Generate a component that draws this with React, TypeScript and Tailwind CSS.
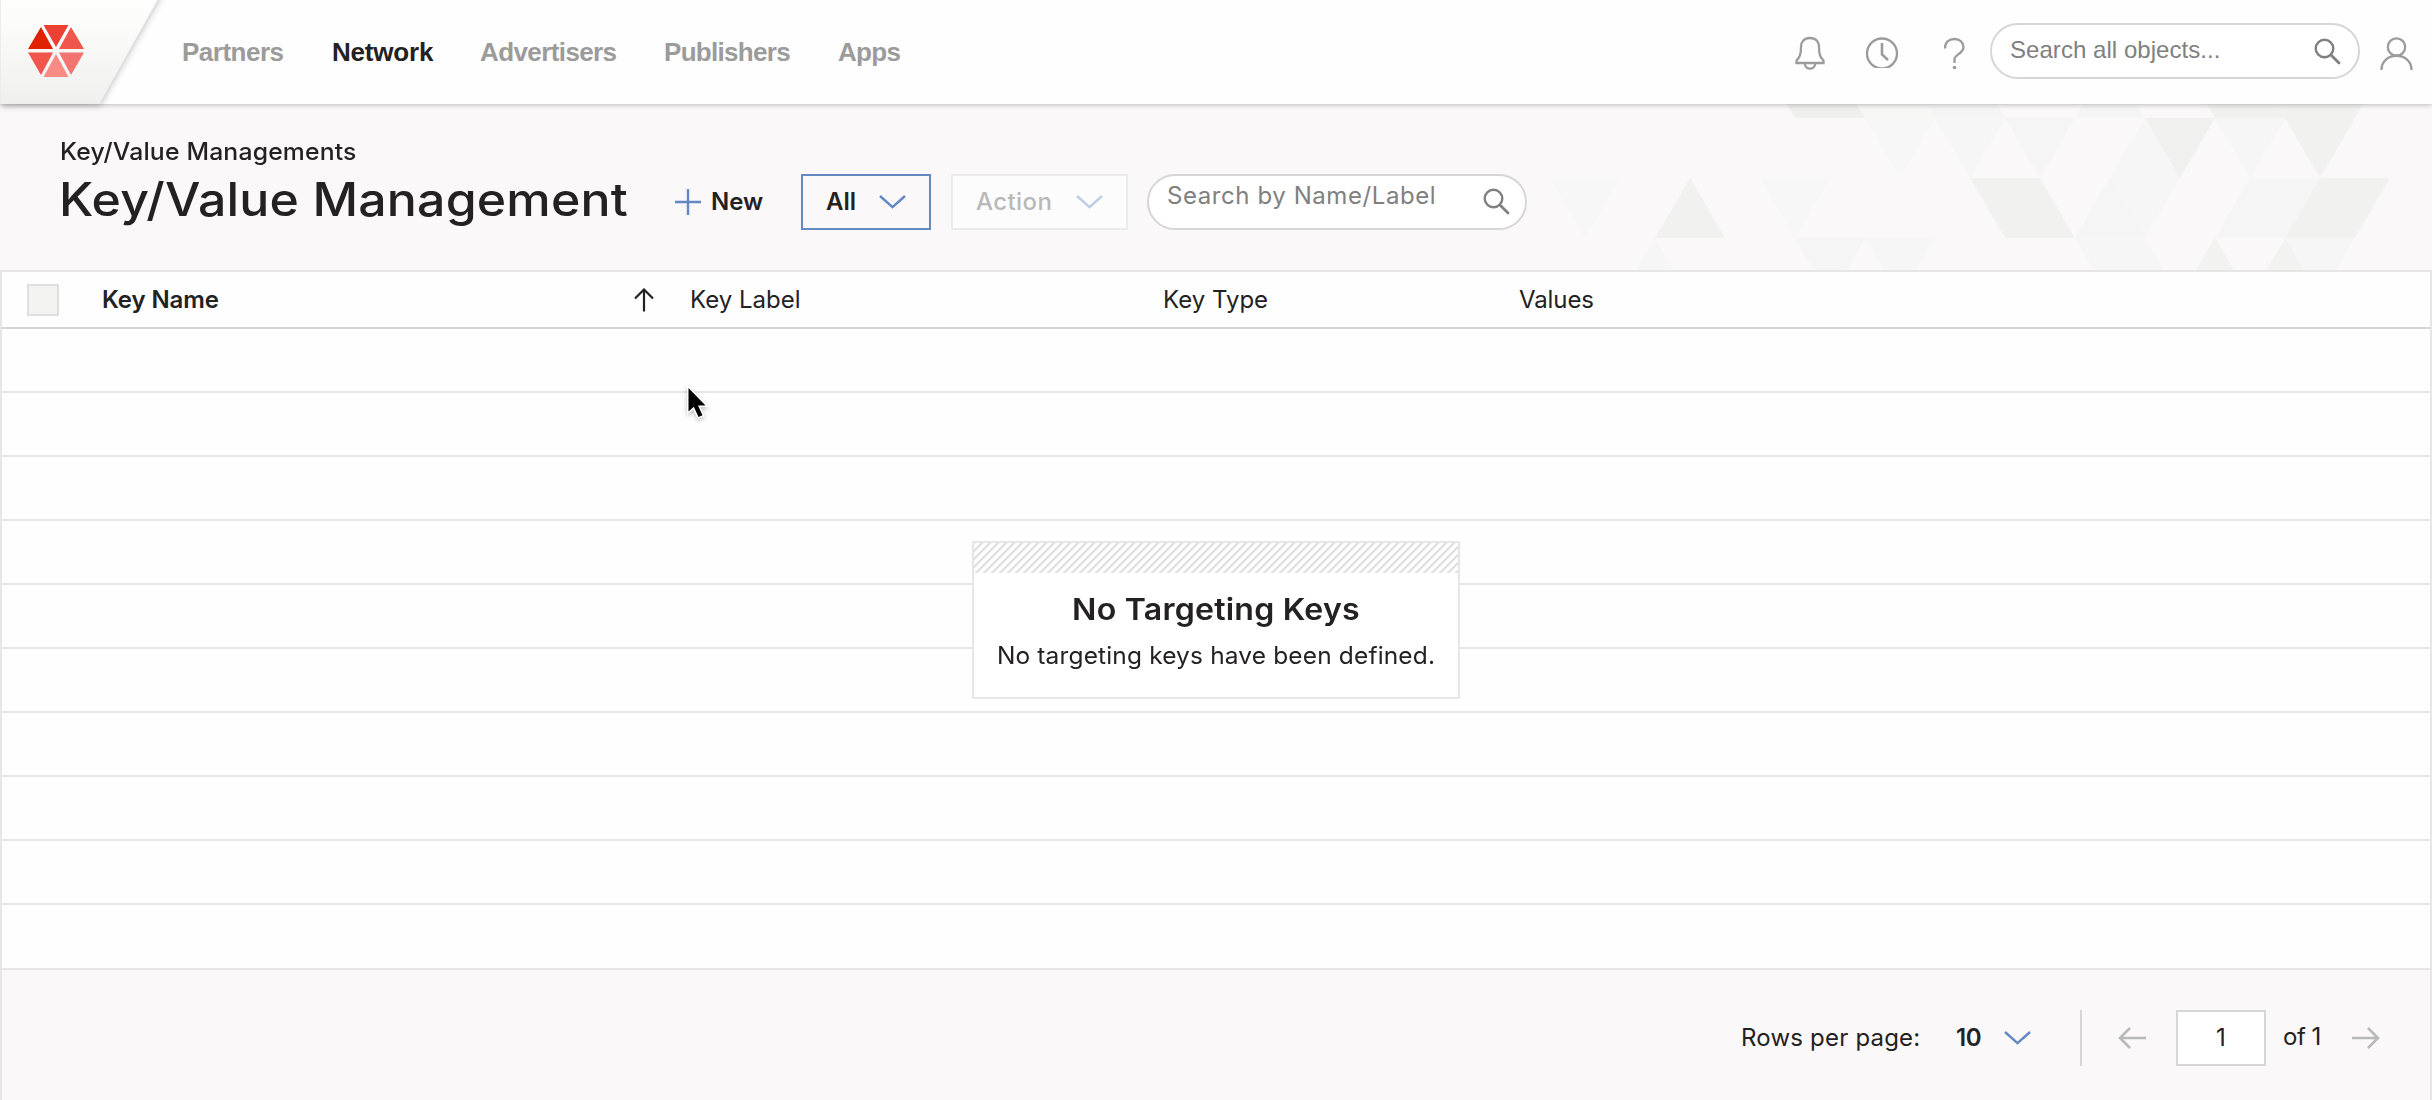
import React from "react";

const NAV = [
  { label: "Partners", className: "w-[150px] text-[#9b9b9b] tracking-[-0.5px]" },
  { label: "Network", className: "w-[148px] text-[#232122] tracking-[-0.2px]" },
  { label: "Advertisers", className: "w-[184px] text-[#9b9b9b] tracking-[-0.6px]" },
  { label: "Publishers", className: "w-[174px] text-[#9b9b9b] tracking-[-0.7px]" },
  { label: "Apps", className: "text-[#9b9b9b] tracking-[-0.7px]" },
];

function Logo() {
  return (
    <svg className="h-[124px] w-[182px] shrink-0 self-start" viewBox="0 0 182 124">
      <defs>
        <linearGradient id="tab" x1="0" y1="0" x2="0" y2="1">
          <stop offset="0" stopColor="#ffffff" />
          <stop offset="0.35" stopColor="#fbfbfa" />
          <stop offset="1" stopColor="#efefee" />
        </linearGradient>
        <linearGradient id="first" x1="0" y1="0" x2="1" y2="1">
          <stop offset="0" stopColor="#c81e08" />
          <stop offset="0.5" stopColor="#e12202" />
        </linearGradient>
        <filter id="tabShadow" x="-10%" y="-10%" width="125%" height="130%">
          <feDropShadow dx="1" dy="2" stdDeviation="3" floodColor="#000" floodOpacity="0.22" />
        </filter>
      </defs>
      <path d="M1 -12H164L99 104H1Z" fill="url(#tab)" filter="url(#tabShadow)" />
      <path d="M28 49L41 27L53 49Z" fill="url(#first)" />
      <path d="M43.5 25H68.5L56 47Z" fill="#ee4136" />
      <path d="M71 27L84 49H59Z" fill="#f0564c" />
      <path d="M28 52.5H53L41 75Z" fill="#f0564c" />
      <path d="M56 54L68.5 77H43.5Z" fill="#f88c85" />
      <path d="M59 52.5H84L71 75Z" fill="#f47471" />
    </svg>
  );
}

function SearchIcon({ className }: { className: string }) {
  return (
    <svg className={className} viewBox="0 0 27 27" fill="none" stroke="#808080" strokeWidth="2.4">
      <circle cx="10.5" cy="10.5" r="8.8" />
      <path d="M17 17L25 25" strokeWidth="2.8" strokeLinecap="round" />
    </svg>
  );
}

function Chevron() {
  return (
    <svg className="h-[14px] w-[27px]" viewBox="0 0 27 14" fill="none" stroke="#6488c4" strokeWidth="2.4">
      <path d="M1 1L13.5 12.2L26 1" />
    </svg>
  );
}

function TopBar() {
  return (
    <header className="relative z-10 flex h-[104px] items-center bg-[#fefefe] shadow-[0_1px_5px_rgba(0,0,0,0.25)]">
      <Logo />
      <nav className="flex font-['Liberation_Sans',sans-serif] text-[26px] leading-[30px] font-bold">
        {NAV.map((n) => (
          <a key={n.label} className={n.className}>
            {n.label}
          </a>
        ))}
      </nav>
      <div className="ml-auto flex items-center">
        <svg className="mt-px h-[34px] w-[30px]" viewBox="0 0 30 34" fill="none" stroke="#9b9b9b" strokeWidth="2.3">
          <path d="M15 2C9 2 6 6 6 11C6 19 4.500 21.500 1.500 24.500V27H28.500V24.500C25.500 21.500 24 19 24 11C24 6 21 2 15 2Z" />
          <path d="M9.700 27.500C10.200 34.300 19.800 34.300 20.300 27.500" />
        </svg>
        <svg className="mt-px ml-[40px] h-[31px] w-[34px]" viewBox="0 0 34 31" fill="none" stroke="#9b9b9b" strokeWidth="2.3">
          <circle cx="17" cy="16.500" r="15" />
          <path d="M17 6V17.500L23 23" strokeWidth="2.6" />
        </svg>
        <svg className="mt-px ml-[44px] h-[32px] w-[22px]" viewBox="0 0 22 32" fill="none" stroke="#9b9b9b" strokeWidth="2.3">
          <path d="M2 11.500C2 5 6 2 11.500 2C17 2 20.500 5.500 20.500 10C20.500 17 11.500 17 11.500 22.500V26" />
          <circle cx="11.500" cy="30.500" r="1.800" fill="#9b9b9b" stroke="none" />
        </svg>
        <div className="-mt-[2px] ml-[25px] flex h-[56px] w-[370px] items-center rounded-full border-2 border-[#d6d6d6] bg-white pr-[17px] pl-[18px]">
          <span className="-mt-[3px] grow font-['Liberation_Sans',sans-serif] text-[24px] leading-[28px] tracking-[0.05px] text-[#808080]">
            Search all objects...
          </span>
          <SearchIcon className="mt-px h-[27px] w-[27px]" />
        </div>
        <svg className="mt-[2px] mr-[19px] ml-[20px] h-[33px] w-[33px]" viewBox="0 0 33 33" fill="none" stroke="#9b9b9b" strokeWidth="2.3">
          <circle cx="16.500" cy="10" r="8.700" />
          <path d="M1.500 33C1.500 14 31.500 14 31.500 33" />
        </svg>
      </div>
    </header>
  );
}

/* Triangle lattice: each side is 70px and each row is 60px high. */
const FACETS: [string, string][] = [
  ["226,-46 296,-46 331,14 261,14", "#efefed"],
  ["296,-46 366,-46 401,14 331,14", "#f7f7f6"],
  ["366,-46 436,-46 471,14 401,14", "#f4f5f4"],
  ["576,-46 611,14 541,14", "#f4f5f4"],
  ["646,-46 716,-46 751,14 681,14", "#f1f2f0"],
  ["716,-46 856,-46 821,14 751,14", "#f1f2f0"],
  ["331,14 401,14 366,74", "#f6f7f6"],
  ["401,14 471,14 436,74", "#f5f6f5"],
  ["471,14 541,14 506,74", "#f4f5f4"],
  ["611,14 646,74 576,74", "#f5f6f5"],
  ["611,14 681,14 646,74", "#f0f1ef"],
  ["681,14 751,14 716,74", "#f5f6f5"],
  ["751,14 821,14 786,74", "#f1f2f0"],
  ["16,74 86,74 51,134", "#f6f7f6"],
  ["156,74 191,134 121,134", "#f1f2f0"],
  ["226,74 296,74 261,134", "#f6f7f6"],
  ["436,74 506,74 541,134 471,134", "#f1f2f0"],
  ["576,74 646,74 611,134 541,134", "#f5f6f5"],
  ["576,74 611,134 541,134", "#f4f5f4"],
  ["716,74 786,74 751,134 681,134", "#f4f5f4"],
  ["786,74 856,74 821,134 751,134", "#f1f2f0"],
  ["121,134 156,194 86,194", "#f5f6f5"],
  ["261,134 331,134 296,194", "#f4f5f4"],
  ["331,134 401,134 366,194", "#f5f6f5"],
  ["541,134 611,134 646,194 576,194", "#f5f6f5"],
  ["681,134 716,194 646,194", "#f2f3f1"],
  ["751,134 786,194 716,194", "#f2f3f1"],
  ["751,134 821,134 786,194", "#f5f6f5"],
];

function TitleBand() {
  return (
    <section className="relative flex h-[166px] bg-[#faf8f8] pl-[60px] font-[Inter,sans-serif] text-[#232122]">
      <svg className="absolute top-0 right-0 h-[166px] w-[898px]" viewBox="0 0 898 166">
        {FACETS.map(([points, fill], i) => (
          <polygon key={i} points={points} fill={fill} />
        ))}
      </svg>
      <div className="relative w-[614px] pt-[34px]">
        <div className="origin-left scale-x-[1.03] text-[24px] leading-[28px] font-medium tracking-[0.18px]">
          Key/Value Managements
        </div>
        <h1 className="-ml-px mt-[5px] origin-left scale-x-[1.087] text-[46px] leading-[56px] font-medium tracking-[0.15px] whitespace-nowrap">
          Key/Value Management
        </h1>
      </div>
      <div className="relative mt-[70px] flex h-[56px] items-center text-[24px] leading-[28px] font-semibold">
        <svg className="h-[28px] w-[28px]" viewBox="0 0 28 28" stroke="#6488c4" strokeWidth="2.4">
          <path d="M1 14H27M14 1V27" />
        </svg>
        <span className="-mt-px ml-[9px] w-[90px]">New</span>
        <div className="flex h-[56px] w-[130px] items-center justify-between border-2 border-[#6488c4] pr-[23px] pl-[23px]">
          <span className="-mt-px">All</span>
          <Chevron />
        </div>
        <div className="ml-[20px] flex h-[56px] w-[177px] items-center justify-between border-2 border-[#ebebeb] bg-[#fcfcfc] pr-[23px] pl-[23px]">
          <span className="-mt-px font-medium tracking-[0.4px] text-[#b9b8b8]">Action</span>
          <span className="flex opacity-40">
            <Chevron />
          </span>
        </div>
        <div className="ml-[19px] flex h-[56px] w-[380px] items-center rounded-full border-2 border-[#d6d6d6] bg-white pr-[15px] pl-[18px]">
          <span className="-mt-[13px] grow font-normal tracking-[0.58px] text-[#808080]">Search by Name/Label</span>
          <SearchIcon className="-mt-px h-[27px] w-[27px]" />
        </div>
      </div>
    </section>
  );
}

function EmptyCard() {
  return (
    <div className="absolute top-[269px] left-[970px] h-[158px] w-[488px] border-2 border-[#e6e6e6] bg-white text-center">
      <svg className="block h-[30px] w-full">
        <defs>
          <pattern id="hatch" width="8" height="8" patternUnits="userSpaceOnUse">
            <path d="M-2 10L10 -2M-2 2L2 -2M6 10L10 6" stroke="#e2e2e2" strokeWidth="2.4" />
          </pattern>
        </defs>
        <rect width="100%" height="100%" fill="url(#hatch)" />
      </svg>
      <h2 className="mt-[18px] scale-x-[1.07] text-[30px] leading-[36px] font-semibold tracking-[0.2px]">
        No Targeting Keys
      </h2>
      <p className="mt-[15px] scale-x-[1.02] text-[24px] leading-[28px] tracking-[0.15px] whitespace-nowrap">
        No targeting keys have been defined.
      </p>
    </div>
  );
}

function Table() {
  return (
    <section className="relative border-t-2 border-[#e6e6e6] bg-[#fefefe]">
      <div className="flex h-[57px] items-center border-b-2 border-[#d4d4d4] pt-px pl-[25px] text-[24px] leading-[28px]">
        <span className="h-[32px] w-[32px] border-2 border-[#dfdfde] bg-[#f3f3f2]" />
        <span className="ml-[43px] w-[532px] font-semibold tracking-[-0.1px]">Key Name</span>
        <svg className="-mt-px h-[24px] w-[20px]" viewBox="0 0 20 24" fill="none" stroke="#232122" strokeWidth="2.2">
          <path d="M10 23.500V2M1 10.500L10 1.500L19 10.500" />
        </svg>
        <span className="ml-[36px] w-[473px]">Key Label</span>
        <span className="w-[356px]">Key Type</span>
        <span className="tracking-[-0.1px]">Values</span>
      </div>
      <div className="pb-px">
        {Array.from({ length: 9 }, (_, i) => (
          <div key={i} className="h-[64px] border-b-2 border-[#e6e6e6]" />
        ))}
        <div className="-mb-px h-[65px] border-b-2 border-[#e6e6e6]" />
      </div>
      <EmptyCard />
    </section>
  );
}

function PageArrow({ className }: { className: string }) {
  return (
    <svg className={className} viewBox="0 0 28 22" fill="none" stroke="#b9b9b9" strokeWidth="2.6">
      <path d="M28 11H2M12 1L2 11L12 21" />
    </svg>
  );
}

function Footer() {
  return (
    <footer className="flex grow items-start justify-end bg-[#faf8f8] pt-[40px] pr-[50px] text-[24px] leading-[28px]">
      <div className="flex h-[56px] items-center">
        <span className="w-[215px] tracking-[0.2px]">Rows per page:</span>
        <span className="w-[48px] font-semibold tracking-[-0.5px]">10</span>
        <Chevron />
        <span className="ml-[49px] h-[56px] w-[2px] bg-[#d6d6d6]" />
        <PageArrow className="ml-[36px] h-[22px] w-[28px]" />
        <span className="ml-[30px] flex h-[56px] w-[90px] items-center justify-center border-2 border-[#d6d6d6] bg-white">
          1
        </span>
        <span className="-mt-[2px] ml-[17px] w-[69px] tracking-[-0.5px]">of 1</span>
        <PageArrow className="h-[22px] w-[28px] rotate-180" />
      </div>
    </footer>
  );
}

function Cursor() {
  return (
    <svg className="absolute top-[384px] left-[684px] z-20 h-[42px] w-[32px] drop-shadow-[0_2px_2px_rgba(0,0,0,0.25)]" viewBox="0 0 32 42">
      <path
        d="M4.500 4V27.500L9.800 22.800L14.500 33L18.500 31.200L14 21.500H21.500Z"
        fill="#000"
        stroke="#fff"
        strokeWidth="3"
        paintOrder="stroke"
      />
    </svg>
  );
}

export default function App() {
  return (
    <div className="relative flex h-[1100px] w-[2432px] flex-col overflow-hidden bg-[#faf8f8]">
      <TopBar />
      <TitleBand />
      <main className="flex grow flex-col border-x-2 border-[#e6e6e6] font-[Inter,sans-serif] text-[#232122]">
        <Table />
        <Footer />
      </main>
      <Cursor />
    </div>
  );
}
